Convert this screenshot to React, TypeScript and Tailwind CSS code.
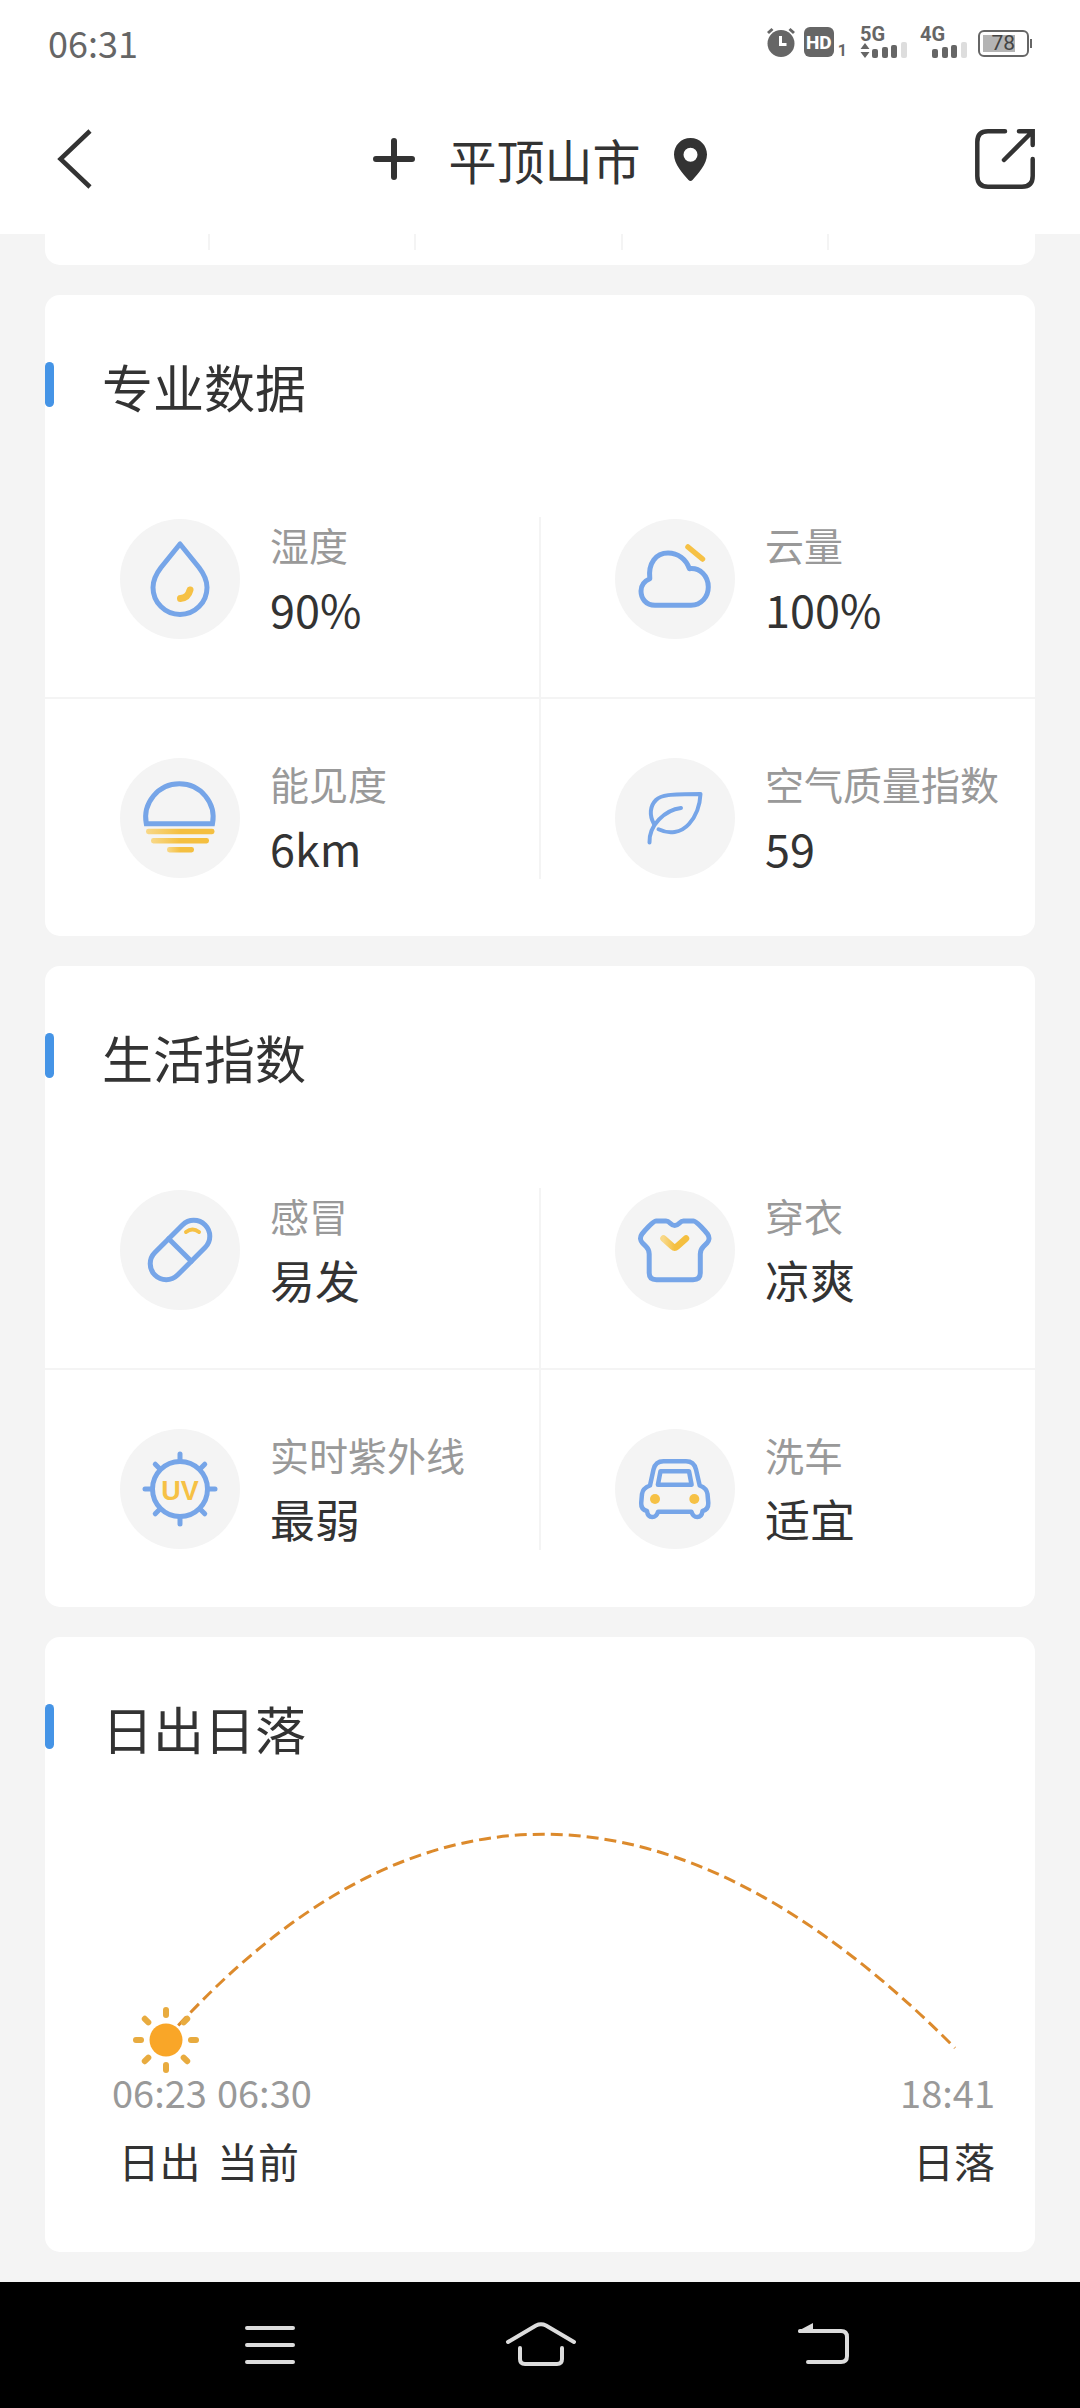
import React from "react";

type IndexItem = {
  label: string;
  value: string;
  icon: React.ReactNode;
};

const BLUE = "#76a5e8";
const YELLOW = "#f6c145";

const DropIcon = () => (
  <>
    <path
      d="M60 25 L41 48.5 C36 55 33 61 33 68.5 a27 27 0 0 0 54 0 C87 61 84 55 79 48.5 Z"
      stroke={BLUE}
    />
    <path d="M60.5 79.5 Q68 79 70 71" stroke={YELLOW} strokeWidth="7" />
  </>
);

const CloudIcon = () => (
  <>
    <path
      d="M40 86.3 C31 86.3 26 79.5 26 72 C26 66 29.5 62 34.8 59.7 C33 44 41 34 53 34 C63 34 71 40 74.4 49.7 C85 48.5 93.3 57 93.3 68 C93.3 78 86 86.3 76 86.3 Z"
      stroke={BLUE}
    />
    <path d="M73 28 L87.5 40" stroke={YELLOW} strokeWidth="5.5" />
  </>
);

const VisibilityIcon = () => (
  <>
    <path
      d="M26.3 65.8 A33.7 33.7 0 1 1 92.5 65.8 Z"
      stroke={BLUE}
      strokeLinejoin="miter"
    />
    <g fill="url(#warm)">
      <rect x="26" y="70.8" width="68.5" height="5.4" rx="2.4" />
      <rect x="31" y="80" width="58" height="5.4" rx="2.4" />
      <rect x="47" y="89" width="27" height="5.4" rx="2.4" />
    </g>
  </>
);

const LeafIcon = () => (
  <g stroke={BLUE} strokeWidth="4">
    <path d="M39 66 C34 57 35 48 41 42 C46 37 54 36 85.5 36 C85 47 82 57 74 66 C66 75 54 76.5 43.5 71.3" />
    <path d="M34.5 84.5 C34 67 50 52 66 50" />
  </g>
);

const PillIcon = () => (
  <>
    <g stroke={BLUE} transform="rotate(-45 60 60)">
      <rect x="24.5" y="44" width="71" height="32" rx="16" />
      <path d="M60 44 V76" />
    </g>
    <path d="M66 42 Q72.5 37 79 42" stroke={YELLOW} strokeWidth="4" />
  </>
);

const ShirtIcon = () => (
  <>
    <path
      d="M41 31 H51 C55 31 55.5 35.5 59.7 35.5 C64 35.5 64.5 31 68.5 31 H78.5 C81.5 31 91 42 92.5 44 C95 47.5 94 51 92 53 L88.5 56.5 C86.5 58.5 85.3 61 85.3 64 V83 C85.3 87.5 82.5 89.7 78 89.7 H41.5 C37 89.7 34.2 87.5 34.2 83 V64 C34.2 61 33 58.5 31 56.5 L27.5 53 C25.5 51 24.5 47.5 27 44 C28.5 42 38 31 41 31 Z"
      stroke={BLUE}
    />
    <path
      d="M48.5 48.5 L57.5 56.5 Q59.7 58.5 62 56.5 L71 48.5"
      stroke="url(#warm)"
      strokeWidth="6.5"
    />
  </>
);

const UvIcon = () => (
  <>
    <g stroke={BLUE}>
      <circle cx="60" cy="60" r="27.5" />
      {[0, 45, 90, 135, 180, 225, 270, 315].map((angle) => (
        <path key={angle} d="M60 31 V25" transform={`rotate(${angle} 60 60)`} />
      ))}
    </g>
    <text
      x="60"
      y="71"
      textAnchor="middle"
      fill={YELLOW}
      fontSize="27"
      fontWeight="700"
      fontFamily="Liberation Sans, sans-serif"
    >
      UV
    </text>
  </>
);

const CarIcon = () => (
  <>
    <g stroke={BLUE} strokeWidth="4.5">
      <path d="M35 56.5 L38.5 40.5 Q40.5 32.3 48.5 32.3 H71 Q79 32.3 81 40.5 L84.7 56.5 C90 58.5 92 61 92.5 65 L93.3 74 C93.5 78.5 91.5 81 87.5 82 C87 86.5 85 88 82.3 88 C79 88 77.5 86.5 76.5 82.7 H43 C42 86.5 40.5 88 37.2 88 C34.5 88 32.5 86.5 32 82 C28 81 26 78.5 26.2 74 L27 65 C27.5 61 29.5 58.5 35 56.5 Z" />
      <path d="M45.5 42.3 H74 L76.6 55.7 H42.9 Z" />
    </g>
    <circle cx="40" cy="70" r="5" fill={YELLOW} />
    <circle cx="79.3" cy="70" r="5" fill={YELLOW} />
  </>
);

const professionalData: IndexItem[] = [
  { label: "湿度", value: "90%", icon: <DropIcon /> },
  { label: "云量", value: "100%", icon: <CloudIcon /> },
  { label: "能见度", value: "6km", icon: <VisibilityIcon /> },
  { label: "空气质量指数", value: "59", icon: <LeafIcon /> },
];

const lifeIndexes: IndexItem[] = [
  { label: "感冒", value: "易发", icon: <PillIcon /> },
  { label: "穿衣", value: "凉爽", icon: <ShirtIcon /> },
  { label: "实时紫外线", value: "最弱", icon: <UvIcon /> },
  { label: "洗车", value: "适宜", icon: <CarIcon /> },
];

const SignalBars = () => (
  <svg width="36" height="17" viewBox="0 0 36 17">
    <rect x="0" y="8" width="6" height="9" rx="2" fill="#666" />
    <rect x="10" y="6" width="6" height="11" rx="2" fill="#666" />
    <rect x="19" y="4" width="6" height="13" rx="2" fill="#666" />
    <rect x="29" y="1" width="6" height="16" rx="2" fill="#ddd" />
  </svg>
);

const StatusBar = () => (
  <div className="flex h-[84px] items-center justify-between bg-white pr-12 pl-12 text-[#666]">
    <span className="text-[36px] leading-[36px]">06:31</span>
    <div className="flex h-[30px] items-end">
      <svg width="30" height="30" viewBox="0 0 30 30" fill="none">
        <circle cx="15" cy="16.5" r="13.5" fill="#666" />
        <path d="M2 6 L6.5 2 M28 6 L23.5 2" stroke="#666" strokeWidth="3" />
        <path d="M14.5 9 V17.5 H20.5" stroke="#fff" strokeWidth="3" />
      </svg>
      <span className="ml-2 flex h-[30px] w-[30px] items-center justify-center rounded-md bg-[#666] font-['Roboto'] text-[19px] leading-none font-extrabold text-white">
        HD
      </span>
      <span className="ml-1 font-['Roboto'] text-[16px] leading-[12px] font-bold">
        1
      </span>
      <div className="ml-[13px] flex h-[30px] w-[48px] flex-col font-['Roboto'] text-[20px] leading-[15px] font-bold">
        <span>5G</span>
        <div className="-mt-px flex items-end justify-between">
          <svg width="10" height="17" viewBox="0 0 10 17" fill="#666">
            <path d="M5 2 L9.5 8 H0.5 Z M5 17 L9.5 11 H0.5 Z" />
          </svg>
          <SignalBars />
        </div>
      </div>
      <div className="ml-[12px] flex h-[30px] w-[48px] flex-col font-['Roboto'] text-[20px] leading-[15px] font-bold">
        <span>4G</span>
        <div className="-mt-px flex justify-end">
          <SignalBars />
        </div>
      </div>
      <div className="ml-[10px] flex items-center">
        <div className="flex h-[27px] w-[51px] items-center rounded-md border-2 border-[#666] p-[3px]">
          <div className="flex h-full w-[32px] items-center justify-end bg-[#b4b4b4] font-['Roboto'] text-[21px] leading-none text-[#444]">
            78
          </div>
        </div>
        <div className="ml-px h-[9px] w-[2px] bg-[#666]" />
      </div>
    </div>
  </div>
);

const Header = () => (
  <header className="grid h-[150px] grid-cols-[1fr_auto_1fr] items-center bg-white px-[45px] text-[#333]">
    <button aria-label="返回" className="flex w-[60px] justify-center">
      <svg width="36" height="60" viewBox="0 0 36 60" fill="none">
        <path d="M33 2 L3.5 30 L33 58" stroke="#333" strokeWidth="4.5" />
      </svg>
    </button>
    <div className="flex items-center gap-[33px]">
      <button aria-label="添加城市">
        <svg width="42" height="42" viewBox="0 0 42 42" fill="none">
          <path
            d="M21 3 V39 M3 21 H39"
            stroke="#333"
            strokeWidth="6"
            strokeLinecap="round"
          />
        </svg>
      </button>
      <h1 className="text-[48px] leading-[60px]">平顶山市</h1>
      <svg width="33" height="43" viewBox="0 0 33 43">
        <path
          d="M16.5 0 C7 0 0 7.5 0 16.5 C0 26 9 36 14.5 42 Q16.5 44 18.5 42 C24 36 33 26 33 16.5 C33 7.5 26 0 16.5 0 Z M16.5 9.7 a7 7 0 1 1 0 14 a7 7 0 1 1 0 -14 Z"
          fill="#333"
          fillRule="evenodd"
        />
      </svg>
    </div>
    <button aria-label="分享" className="justify-self-end">
      <svg
        width="60"
        height="60"
        viewBox="0 0 60 60"
        fill="none"
        stroke="#333"
        strokeWidth="4.5"
        strokeLinecap="round"
      >
        <path d="M30 2.3 H13 Q2.3 2.3 2.3 13 V47 Q2.3 57.7 13 57.7 H47 Q57.7 57.7 57.7 47 V30" />
        <path d="M29 31 L57 3 M44 2.3 H57.7 V16" />
      </svg>
    </button>
  </header>
);

const CardTitle = ({ children }: { children: React.ReactNode }) => (
  <div className="flex h-[165px] items-start pt-[67px]">
    <span className="h-[45px] w-[9px] rounded-full bg-[#4594e6]" />
    <h2 className="ml-[48px] text-[51px] leading-[48px]">{children}</h2>
  </div>
);

const IndexCell = ({ label, value, icon }: IndexItem) => (
  <div className="flex h-[237px] items-center pl-[75px]">
    <svg
      className="shrink-0 rounded-full bg-[#f4f4f4]"
      width="120"
      height="120"
      viewBox="0 0 120 120"
      fill="none"
      strokeWidth="5"
      strokeLinecap="round"
      strokeLinejoin="round"
    >
      <defs>
        <linearGradient id="warm" x1="0" x2="1" y1="0" y2="0">
          <stop offset="0" stopColor="#f8d888" />
          <stop offset="0.5" stopColor="#f4bf40" />
        </linearGradient>
      </defs>
      {icon}
    </svg>
    <div className="ml-[30px] whitespace-nowrap">
      <div className="text-[39px] leading-[60px] text-[#999]">{label}</div>
      <div className="text-[45px] leading-[70px]">{value}</div>
    </div>
  </div>
);

const IndexCard = ({ title, items }: { title: string; items: IndexItem[] }) => (
  <section className="rounded-[15px] bg-white">
    <CardTitle>{title}</CardTitle>
    <div className="relative">
      <div className="grid grid-cols-2">
        {items.slice(0, 2).map((item) => (
          <IndexCell key={item.label} {...item} />
        ))}
      </div>
      <div className="h-[2px] bg-[#f4f4f4]" />
      <div className="grid grid-cols-2">
        {items.slice(2).map((item) => (
          <IndexCell key={item.label} {...item} />
        ))}
      </div>
      {/* vertical divider over both rows */}
      <div className="absolute inset-y-[57px] left-1/2 w-[2px] -translate-x-1/2 bg-[#f4f4f4]" />
    </div>
  </section>
);

const SunCard = () => (
  <section className="rounded-[15px] bg-white pb-16">
    <CardTitle>日出日落</CardTitle>
    <svg className="block w-full" viewBox="0 0 990 272" fill="none">
      <path
        d="M121 237 Q490 -177 910 246"
        stroke="#dc8a2c"
        strokeWidth="3"
        strokeDasharray="12 6"
      />
      <circle cx="121" cy="238" r="16.5" fill="#f9a628" />
      <g stroke="#e8ab3f" strokeWidth="6" strokeLinecap="round">
        {[0, 45, 90, 135, 180, 225, 270, 315].map((angle) => (
          <path
            key={angle}
            d="M121 213 V208"
            transform={`rotate(${angle} 121 238)`}
          />
        ))}
      </g>
    </svg>
    <div className="flex justify-between pr-[40px] pl-[67px]">
      <div className="flex gap-[10px]">
        <div className="flex flex-col items-center gap-[22px]">
          <span className="text-[38px] leading-[36px] text-[#999]">06:23</span>
          <span className="text-[41px] leading-[56px]">日出</span>
        </div>
        <div className="flex flex-col items-start gap-[22px]">
          <span className="text-[38px] leading-[36px] text-[#999]">06:30</span>
          <span className="text-[41px] leading-[56px]">当前</span>
        </div>
      </div>
      <div className="flex flex-col items-end gap-[22px]">
        <span className="text-[38px] leading-[36px] text-[#999]">18:41</span>
        <span className="text-[41px] leading-[56px]">日落</span>
      </div>
    </div>
  </section>
);

const NavBar = () => (
  <nav className="flex h-[126px] items-center justify-center bg-black">
    <button aria-label="菜单" className="flex w-1/4 justify-center">
      <svg width="80" height="48" viewBox="0 0 80 48" fill="none">
        <path
          d="M17 7 H63 M17 24 H63 M17 41 H63"
          stroke="#dcdcdc"
          strokeWidth="4"
          strokeLinecap="round"
        />
      </svg>
    </button>
    <button aria-label="主页" className="flex w-1/4 justify-center">
      <svg width="80" height="48" viewBox="0 0 80 48" fill="none">
        <g stroke="#dcdcdc" strokeWidth="4" strokeLinecap="round">
          <path d="M8 21 L36 4.5 Q41 2 46 4.5 L74 21" />
          <path d="M20 27 V38 Q20 43 25 43 H57 Q62 43 62 38 V27" />
        </g>
      </svg>
    </button>
    <button aria-label="后退" className="flex w-1/4 justify-center">
      <svg width="80" height="48" viewBox="0 0 80 48" fill="none">
        <path
          d="M30 10 H71 Q77 10 77 16 V35 Q77 41 71 41 H38"
          stroke="#dcdcdc"
          strokeWidth="4"
          strokeLinecap="round"
        />
        <path d="M28 10 L43 2 V12 H29 Z" fill="#dcdcdc" />
      </svg>
    </button>
  </nav>
);

const App = () => {
  return (
    <div className="flex min-h-screen flex-col bg-[#f4f4f4] font-['Noto_Sans_CJK_SC',sans-serif] text-[#333]">
      <StatusBar />
      <Header />
      <main className="flex grow flex-col gap-[30px] px-[45px] pb-[30px]">
        {/* tail of the forecast card scrolled under the header */}
        <section className="flex h-[31px] overflow-hidden rounded-b-[15px] bg-white">
          <div className="h-[16px] w-1/6 border-r-2 border-[#f4f4f4]" />
          <div className="h-[16px] w-5/24 border-r-2 border-[#f4f4f4]" />
          <div className="h-[16px] w-5/24 border-r-2 border-[#f4f4f4]" />
          <div className="h-[16px] w-5/24 border-r-2 border-[#f4f4f4]" />
        </section>
        <IndexCard title="专业数据" items={professionalData} />
        <IndexCard title="生活指数" items={lifeIndexes} />
        <SunCard />
      </main>
      <NavBar />
    </div>
  );
};

export default App;
